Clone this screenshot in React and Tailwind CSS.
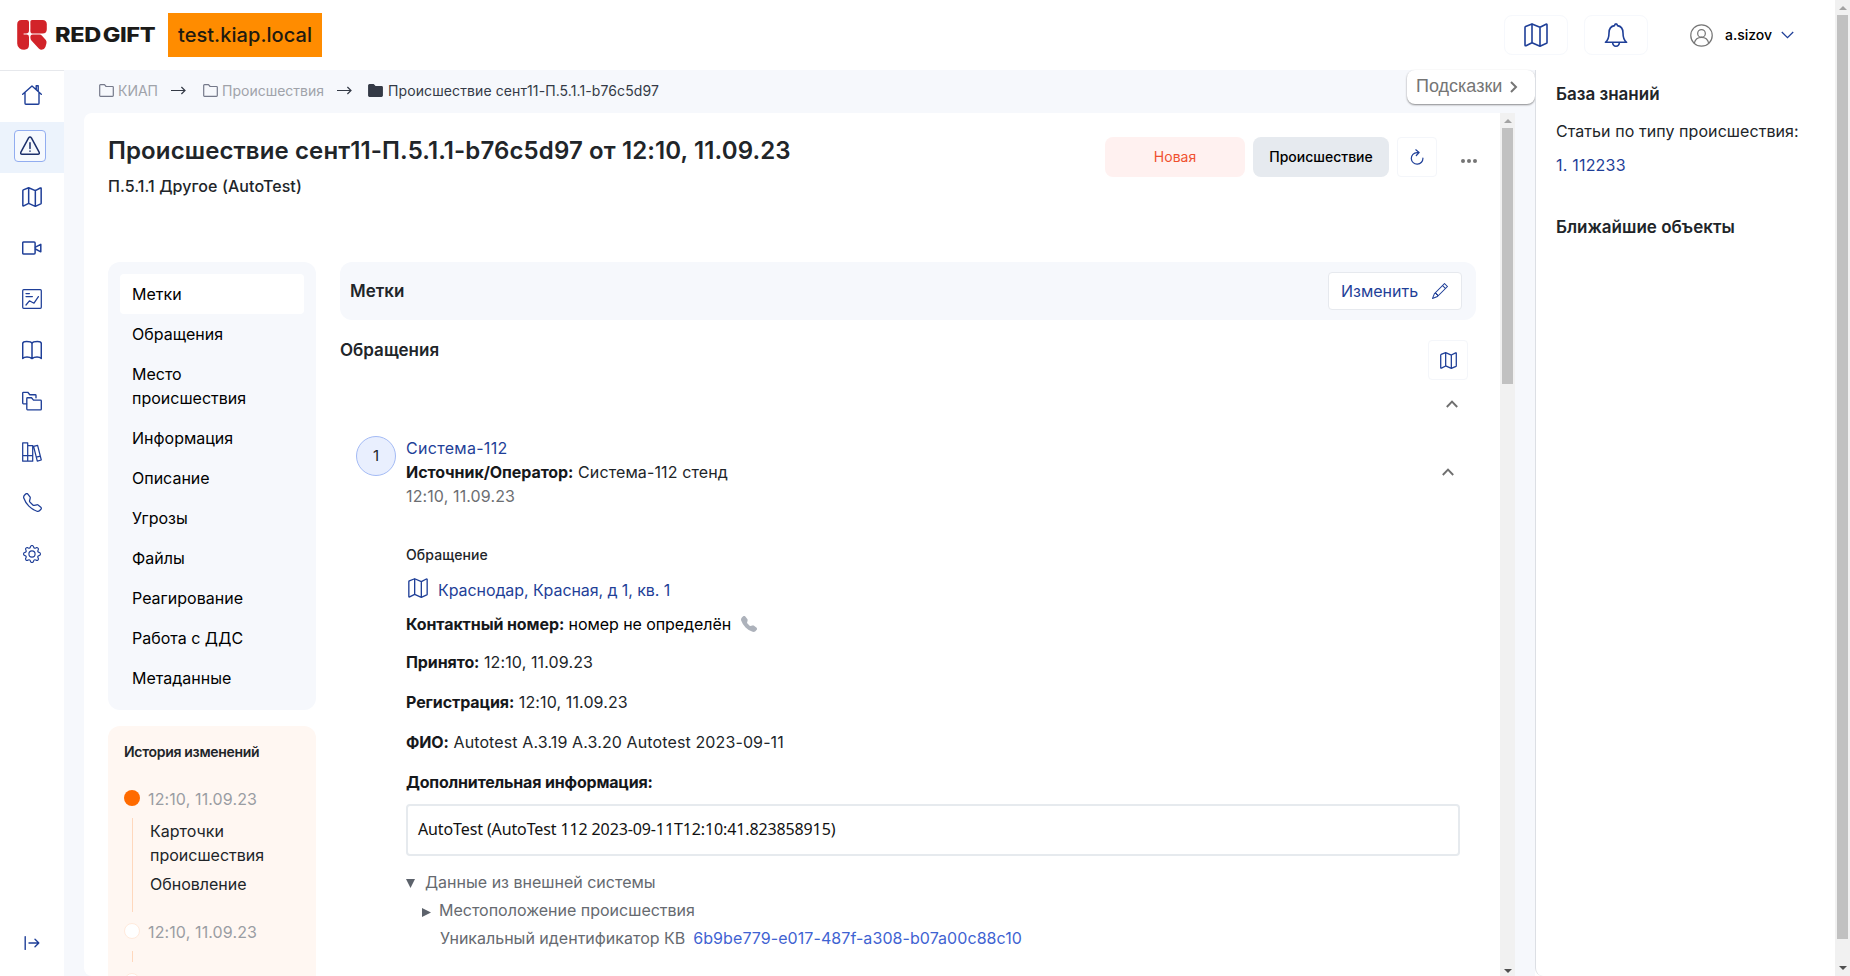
import React from 'react';
import { BsGear, BsTelephone, BsTelephoneFill, BsPencil } from 'react-icons/bs';

function Svg({ children, className, box = '0 0 24 24', w = 1.4 }) {
  return (
    <svg viewBox={box} className={className} fill="none" stroke="currentColor" strokeWidth={w} strokeLinecap="round" strokeLinejoin="round">
      {children}
    </svg>
  );
}

const MapIcon = ({ className, w }) => (
  <Svg className={className} w={w}>
    <path d="M1 4.4Q1 3.8 1.6 3.4L8 .9l8 3.4L22 1.2q1-.4 1 .6v17.6q0 .6-.5.9L16 23.2l-8-3.5-6 3q-1 .4-1-.6zM8 .9v18.8M16 4.3v18.9" />
  </Svg>
);
const HomeIcon = () => (
  <Svg className="h-5 w-5" box="0 0 20 20" w={1.4}>
    <path d="M.7 9.2 10 .9l9.3 8.3M3 7.5v10.8q0 .9.9.9h12.2q.9 0 .9-.9V7.5M14.2 4.3V.8h2v5.6" />
  </Svg>
);
const AlertIcon = () => (
  <Svg className="h-5 w-5" box="0 0 20 20" w={1.5}>
    <path d="M8.6 1.9.9 16.2q-.8 1.9 1.2 2.1h15.8q2-.2 1.2-2.1L11.4 1.9q-1.4-2-2.8 0zM10 6.8v5.6M10 15v.3" />
  </Svg>
);
const VideoIcon = () => (
  <Svg className="h-5 w-5" box="0 0 20 20" w={1.5}>
    <rect x=".7" y="4" width="12.4" height="12" rx="1" />
    <path d="M13.4 9.2 18.8 6.4v7.4l-5.4-2.8" />
  </Svg>
);
const ReportIcon = () => (
  <Svg className="h-5 w-5" box="0 0 20 20" w={1.25}>
    <rect x=".7" y=".7" width="18.6" height="18.6" rx="1" />
    <path d="M4 4.6h3.4M4 7.6h6.4M4 16l3.4-4.2 4.6 2.4L16.4 7.6" />
  </Svg>
);
const BookIcon = () => (
  <Svg className="h-5 w-5" box="0 0 20 20" w={1.5}>
    <path d="M.7 18.4V3.4Q1 1.6 4.6 1.6 9.2 1.6 10 3.4q.8-1.8 5.4-1.8 3.6 0 3.9 1.8v15M.7 18.4Q2 17 5 17t5 1.6Q12 17 15 17t4.3 1.4M10 3.4v15.2" />
  </Svg>
);
const FoldersIcon = () => (
  <Svg className="h-5 w-5" box="0 0 20 20" w={1.35}>
    <path d="M4.6 12.8H1.4q-.7 0-.7-.7V2q0-.7.7-.7h4.4l2 2.4h5.4q.8 0 .8.8v2.3" />
    <path d="M4.8 17.8V7.4q0-.7.7-.7h4l2 2.4h7q.8 0 .8.8v8q0 .9-.8.9h-13q-.7 0-.7-1z" />
  </Svg>
);
const LibraryIcon = () => (
  <Svg className="h-5 w-5" box="0 0 20 20" w={1.25}>
    <path d="M.7.8h5v18.4h-5zM5.7 3.5h5v15.7h-5zM.7 13.6h10M11.6 4.4 15.6 3.3l3.7 14.7-4 1.1zM14.3 15.2l4.1-1.1" />
  </Svg>
);
const CollapseIcon = () => (
  <Svg className="h-4 w-4" box="0 0 16 16" w={1.4}>
    <path d="M1.2 1.6v12.8M5 8h9.8M11 4.2 14.8 8 11 11.8" />
  </Svg>
);
const BellIcon = () => (
  <Svg className="h-6 w-6" w={1.6}>
    <path d="M1.4 19.3q3.6-2.6 3.6-9.3Q5 3.4 10.6 2.6 10.6.9 12 .9t1.4 1.7Q19 3.4 19 10q0 6.700 3.600 9.300zM8.600 19.500q.3 3.700 3.400 3.700t3.400-3.700" />
  </Svg>
);
const UserIcon = () => (
  <Svg className="h-[23px] w-[23px] text-[#777]" w={1.3}>
    <circle cx="12" cy="12" r="11.2" />
    <circle cx="12" cy="9.8" r="4" />
    <path d="M4.5 20q1.4-6 7.5-6t7.5 6" />
  </Svg>
);
const RefreshIcon = () => (
  <Svg className="h-4 w-4" box="0 0 16 16" w={1.2}>
    <path d="M9.2 3.6H8a5.8 5.8 0 1 0 5.9 5.4M6.8.8l3.3 2.7-2.8 3" />
  </Svg>
);
const FolderIcon = ({ filled }) => (
  <svg viewBox="0 0 15 13" className={filled ? 'h-[13px] w-[15px] text-[#343a46]' : 'h-[13px] w-[15px] text-[#75798a]'} fill={filled ? 'currentColor' : 'none'} stroke="currentColor" strokeWidth="1.2" strokeLinejoin="round">
    <path d="M.7 1.5q0-.8.8-.8h4l1.6 1.8h6.4q.8 0 .8.8v8.2q0 .8-.8.8h-12q-.8 0-.8-.8z" />
  </svg>
);
const Arrow = ({ className }) => (
  <svg viewBox="0 0 15 9" className={'h-[9px] w-[15px] text-[#343a46] ' + className} fill="none" stroke="currentColor" strokeWidth="1.2">
    <path d="M0 4.5h14M10.400 1l3.600 3.500L10.400 8" />
  </svg>
);
const ChevronUp = () => (
  <svg viewBox="0 0 12 8" className="h-2 w-3" fill="none" stroke="#6f6f6f" strokeWidth="1.9">
    <path d="M.8 7 6 1.6 11.2 7" />
  </svg>
);

function Scrollbar({ className, thumb, endPad }) {
  return (
    <div className={'flex w-[15px] shrink-0 flex-col items-center bg-[#f1f1f1] ' + className}>
      <div className="flex h-[15px] shrink-0 items-center">
        <svg viewBox="0 0 8 4" className="mt-px h-1 w-2" fill="#a3a3a3"><path d="M4 0l4 4H0z" /></svg>
      </div>
      <div className={'w-[11px] shrink-0 bg-[#c1c1c1] ' + thumb} />
      <div className={'mt-auto ' + endPad}>
        <svg viewBox="0 0 8 4" className="h-1 w-2" fill="#505050"><path d="M4 4l4-4H0z" /></svg>
      </div>
    </div>
  );
}

const sections = ['Метки', 'Обращения', 'Место происшествия', 'Информация', 'Описание', 'Угрозы', 'Файлы', 'Реагирование', 'Работа с ДДС', 'Метаданные'];

const railIcons = [
  <MapIcon className="h-5 w-5" w={1.8} />,
  <VideoIcon />,
  <ReportIcon />,
  <BookIcon />,
  <FoldersIcon />,
  <LibraryIcon />,
  <BsTelephone className="h-[19px] w-[19px]" />,
  <BsGear className="h-[18px] w-[18px]" />,
];

const facts = [
  ['Принято:', '12:10, 11.09.23'],
  ['Регистрация:', '12:10, 11.09.23'],
  ['ФИО:', 'Autotest А.3.19 А.3.20 Autotest 2023-09-11'],
];

function Header() {
  return (
    <header className="flex h-[70px] shrink-0 items-center bg-white pl-[17px]">
      <svg viewBox="0 0 30 30" className="h-[30px] w-[30px]" fill="#d22329">
        <path d="M4.5 0H9.7Q12 0 12 2.3V10.6Q12 13.6 9 13.6H6.6V14.6H9.6Q12 14.6 12 17V24.8Q12 29.7 7.2 29.7 4.4 29.7 2.4 28.2.2 26.6.2 23.5V4.5Q.2 0 4.5 0z" />
        <path d="M15 0H25.5Q29.8 0 29.8 4.5V9Q29.8 13.6 25.5 13.6H16Q13.4 13.6 13.4 11V1.6Q13.4 0 15 0z" />
        <path d="M15.8 14.6H22.5Q24 14.6 25 15.8L28.8 20Q30 21.6 29.4 23.6L28.4 27Q27.4 29.7 24.6 29.7 23 29.7 21.8 28.5L14.4 20.6Q13.4 19.4 13.4 17.6V16.6Q13.4 14.6 15.8 14.6z" />
      </svg>
      <div className="ml-2 w-[113px]">
        <div className="w-[95px] origin-left scale-x-[1.175] whitespace-nowrap text-[20px] font-extrabold leading-[30px] tracking-[-0.3px] text-[#1b1a18] [word-spacing:-2.5px]">RED GIFT</div>
      </div>
      <div className="flex h-11 w-[154px] items-center justify-center bg-[#ff8c00] text-[20px] font-medium tracking-[0.05px] text-[#201a10]">test.kiap.local</div>
      <div className="ml-auto flex items-center pr-[41px] text-[#1f3f98]">
        <div className="flex h-10 w-16 items-center justify-center rounded-lg border border-[#f6f8fc]"><MapIcon className="h-6 w-6" w={1.6} /></div>
        <div className="ml-4 flex h-10 w-16 items-center justify-center rounded-lg border border-[#f6f8fc]"><BellIcon /></div>
        <div className="ml-[42px] flex items-center">
          <UserIcon />
          <span className="ml-3 w-[56px] text-[14px] font-medium leading-5 text-black">a.sizov</span>
          <svg viewBox="0 0 13 8" className="h-2 w-[13px]" fill="none" stroke="currentColor" strokeWidth="1.3"><path d="M.8 1l5.7 5.6L12.2 1" /></svg>
        </div>
      </div>
    </header>
  );
}

function Rail() {
  return (
    <nav className="flex w-16 shrink-0 flex-col border-t border-[#e6e8ec] bg-white text-[#1f3f98]">
      <div className="flex h-[51px] items-center justify-center pb-1"><HomeIcon /></div>
      <div className="flex h-[51px] items-center bg-[#ecf3fc] pb-[3px] pl-3.5">
        <div className="flex h-8 w-8 items-center justify-center rounded border border-[#92adf0] bg-[#f6f9fe] text-[#1b2f6b]"><AlertIcon /></div>
      </div>
      {railIcons.map((icon, i) => (
        <div key={i} className="flex h-[51px] items-center justify-center pb-1">{icon}</div>
      ))}
      <div className="mb-[25px] mt-auto flex justify-center"><CollapseIcon /></div>
    </nav>
  );
}

function SideColumn() {
  return (
    <aside className="w-[208px] shrink-0">
      <div className="rounded-xl bg-[#f6f8fc] p-3">
        {sections.map((s, i) => (
          <div key={s} className={'rounded py-2 pl-3 pr-8 leading-6 text-black ' + (i === 0 ? 'bg-white' : '')}>{s}</div>
        ))}
      </div>
      <div className="mt-4 h-[300px] rounded-xl bg-[#fff7f2] px-4 pt-[13px]">
        <div className="text-[14px] font-semibold leading-[26px] tracking-[-0.3px] text-[#212529]">История изменений</div>
        <div className="mt-[21px] flex h-6 items-center">
          <span className="mb-[1px] h-4 w-4 rounded-full bg-[#ff6b00]" />
          <span className="ml-2 pt-px tracking-[0.12px] text-[#9a9da3]">12:10, 11.09.23</span>
        </div>
        <div className="ml-2 mt-2 h-[94px] border-l border-[#ffd8bd] pl-[17px] pt-px text-[#212529]">
          <div className="leading-6">Карточки происшествия</div>
          <div className="mt-[5px] leading-6">Обновление</div>
        </div>
        <div className="mt-[7px] flex h-6 items-center">
          <span className="h-4 w-4 rounded-full border border-[#ffeadc] bg-white" />
          <span className="ml-2 pt-px tracking-[0.12px] text-[#9a9da3]">12:10, 11.09.23</span>
        </div>
        <div className="ml-2 mt-2 h-[11px] border-l border-[#ffd8bd]" />
        <div className="mt-[11px] h-4 w-4 rounded-full border border-[#ffeadc] bg-white" />
      </div>
    </aside>
  );
}

function Details() {
  return (
    <section className="ml-6 w-[1136px] shrink-0">
      <div className="flex h-[58px] items-center rounded-xl bg-[#f6f8fc] pl-2.5 pr-3.5">
        <h2 className="pb-px text-[17px] font-semibold leading-6">Метки</h2>
        <button className="ml-auto flex h-[38px] w-[134px] items-center justify-between rounded border border-[#e6e9ee] bg-white pl-3 pr-[13px] text-[#1f3f98]">
          Изменить
          <BsPencil className="h-4 w-4" />
        </button>
      </div>
      <div className="flex h-[116px] justify-between">
        <h2 className="mt-[17px] text-[17px] font-semibold leading-[26px]">Обращения</h2>
        <div className="mr-2 mt-5 flex w-10 flex-col items-center">
          <div className="flex h-10 w-10 items-center justify-center rounded border border-[#f4f6fa] text-[#1f3f98]"><MapIcon className="h-[17px] w-[17px]" w={1.8} /></div>
          <div className="ml-2 mt-5"><ChevronUp /></div>
        </div>
      </div>
      <div className="flex pl-4">
        <div className="flex h-10 w-10 items-center justify-center rounded-full border border-[#a4bbf5] bg-[#e9effe] text-[15px]">1</div>
        <div className="ml-2.5 w-[1054px] text-[#212529]">
          <div className="flex items-center justify-between leading-6">
            <div>
              <div className="tracking-[0.3px] text-[#1f3f98]">Система-112</div>
              <div className="tracking-[0.12px]"><b className="font-bold tracking-[-0.07px] text-[#16181b]">Источник/Оператор:</b> Система-112 стенд</div>
              <div className="tracking-[0.12px] text-[#6c6e72]">12:10, 11.09.23</div>
            </div>
            <div className="mr-1.5"><ChevronUp /></div>
          </div>
          <div className="mt-[35px] text-[14px] font-medium leading-6 tracking-[0.1px]">Обращение</div>
          <div className="mt-[9px] flex h-6 items-center text-[#1f3f98]">
            <MapIcon className="ml-0.5 mr-2.5 h-5 w-5" w={1.6} />
            <span className="pt-1 tracking-[-0.08px]">Краснодар, Красная, д 1, кв. 1</span>
          </div>
          <div className="mt-3 flex h-6 items-center whitespace-pre tracking-[-0.07px] text-black">
            <b className="font-bold tracking-[-0.1px] text-[#16181b]">Контактный номер:</b> номер не определён
            <BsTelephoneFill className="ml-2.5 h-4 w-4 text-[#adb2bb]" />
          </div>
          <div className="mt-[6px]">
            {facts.map(([k, v]) => (
              <div key={k} className="h-10 leading-10 tracking-[0.12px]"><b className="font-bold tracking-[-0.1px] text-[#16181b]">{k}</b> {v}</div>
            ))}
            <div className="h-10 font-bold leading-10 tracking-[-0.18px] text-[#16181b]">Дополнительная информация:</div>
          </div>
          <div className="mt-0.5 flex h-[52px] items-center rounded border-2 border-[#e6eaee] pb-0.5 pl-2.5 font-['Noto_Sans',sans-serif] tracking-[-0.12px] text-[#111]">AutoTest (AutoTest 112 2023-09-11T12:10:41.823858915)</div>
          <div className="mt-3 text-[#666a70]">
            <div className="flex h-7 items-center">
              <svg viewBox="0 0 9 9" className="mr-2.5 mt-0.5 h-[9px] w-[9px]" fill="#5c626b"><path d="M0 0h9L4.500 9z" /></svg>
              Данные из внешней системы
            </div>
            <div className="flex h-7 items-center pl-4">
              <svg viewBox="0 0 9 9" className="mr-2 mt-1 h-[9px] w-[9px]" fill="#5c626b"><path d="M0 0v9l9-4.500z" /></svg>
              Местоположение происшествия
            </div>
            <div className="flex h-7 items-center pl-[34px]">
              Уникальный идентификатор КВ
              <span className="ml-2 tracking-[0.07px] text-[#3f63d2]">6b9be779-e017-487f-a308-b07a00c88c10</span>
            </div>
          </div>
        </div>
      </div>
    </section>
  );
}

export default function App() {
  return (
    <div className="flex h-[976px] w-[1850px] overflow-hidden bg-white font-['Inter','Liberation_Sans',sans-serif] text-[16px] text-[#212529]">
      <div className="flex w-[1835px] flex-col">
        <Header />
        <div className="flex h-[906px]">
          <Rail />
          <main className="w-[1471px] bg-[#f6f8fc] pl-5">
            <div className="flex h-[43px] justify-between">
              <div className="flex h-[41px] items-center pl-[15px] text-[14px] text-[#a0a3aa]">
                <FolderIcon />
                <span className="ml-1">КИАП</span>
                <Arrow className="ml-[13px] mr-[17px]" />
                <FolderIcon />
                <span className="ml-1">Происшествия</span>
                <Arrow className="ml-[13px] mr-4" />
                <FolderIcon filled />
                <span className="ml-[5px] tracking-[0.1px] text-[#343a46]">Происшествие сент11-П.5.1.1-b76c5d97</span>
              </div>
              <div className="flex h-[34px] w-32 items-center rounded-lg bg-white pb-px pl-[9px] font-['Liberation_Sans',sans-serif] text-[18px] text-[#757575] shadow-[0_1px_2px_rgba(0,0,0,0.45)]">
                Подсказки
                <svg viewBox="0 0 8 12" className="ml-2 h-3 w-2" fill="none" stroke="#757575" strokeWidth="2"><path d="M1 1l5 5-5 5" /></svg>
              </div>
            </div>
            <div className="flex h-[863px] w-[1431px] overflow-hidden rounded-l-lg bg-white">
              <div className="w-[1416px] pl-6">
                <div className="flex h-[149px] items-start pt-6">
                  <div>
                    <h1 className="text-[24px] font-semibold leading-7 tracking-[0.12px]">Происшествие сент11-П.5.1.1-b76c5d97 от 12:10, 11.09.23</h1>
                    <div className="mt-[9px] font-medium leading-6 tracking-[0.08px]">П.5.1.1 Другое (AutoTest)</div>
                  </div>
                  <div className="ml-auto mr-[23px] flex text-[14px]">
                    <div className="flex h-10 w-[140px] items-center justify-center rounded-lg bg-[#fff1f0] pb-0.5 text-[#f0502f]">Новая</div>
                    <div className="ml-2 flex h-10 w-[136px] items-center justify-center rounded-lg bg-[#e6eaef] pb-0.5 font-medium text-black">Происшествие</div>
                    <div className="ml-2 flex h-10 w-10 items-center justify-center rounded border border-[#f4f6fa] text-[#1f3f98]"><RefreshIcon /></div>
                    <div className="ml-6 flex w-4 items-center justify-between pt-2">
                      <i className="h-1 w-1 rounded-full bg-[#757575]" /><i className="h-1 w-1 rounded-full bg-[#757575]" /><i className="h-1 w-1 rounded-full bg-[#757575]" />
                    </div>
                  </div>
                </div>
                <div className="flex">
                  <SideColumn />
                  <Details />
                </div>
              </div>
              <Scrollbar className="h-full" thumb="h-[256px]" endPad="mb-[3px]" />
            </div>
          </main>
          <aside className="w-[300px] rounded-bl-lg border-l border-[#dcdfe4] bg-white pl-5 pt-[11px]">
            <h2 className="text-[17px] font-semibold leading-[26px]">База знаний</h2>
            <p className="mt-3 leading-6 tracking-[0.07px]">Статьи по типу происшествия:</p>
            <p className="mt-2.5 leading-6 tracking-[0.2px] text-[#1f3f98]">1. 112233</p>
            <h2 className="mt-[37px] text-[17px] font-semibold leading-[26px]">Ближайшие объекты</h2>
          </aside>
        </div>
      </div>
      <Scrollbar className="h-full" thumb="h-[924px]" endPad="mb-1.5" />
    </div>
  );
}
